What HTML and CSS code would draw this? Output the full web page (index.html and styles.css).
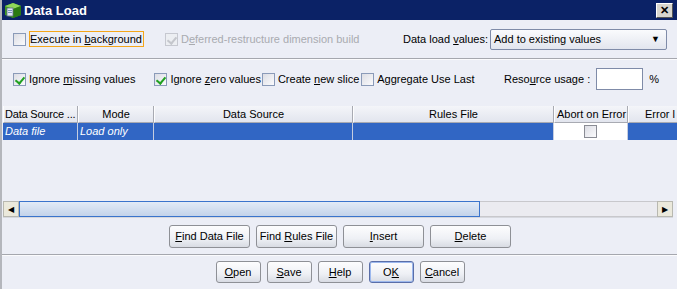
FILE: index.html
```html
<!DOCTYPE html>
<html lang="en">
<head>
  <meta charset="UTF-8" />
  <title>Data Load</title>
  <link rel="stylesheet" href="styles.css">
</head>
<body>
  <div class="dialog">
    <div class="titlebar">
      <svg class="app-icon" width="18" height="17" viewBox="0 0 18 17">
        <polygon points="9,1 17,4 17,13 9,16 1,13 1,4" fill="#3d9a1e"/>
        <polygon points="9,1 17,4 9,7 1,4" fill="#8fd65a"/>
        <polygon points="9,7 17,4 17,13 9,16" fill="#2a7a12"/>
        <rect x="3" y="6" width="6" height="8" fill="#dfe6f2" stroke="#5a6a8a" stroke-width="0.8"/>
        <line x1="4" y1="8.5" x2="8" y2="8.5" stroke="#5a7ab0" stroke-width="0.8"/>
        <line x1="4" y1="10.5" x2="8" y2="10.5" stroke="#5a7ab0" stroke-width="0.8"/>
      </svg>
      <span class="title">Data Load</span>
      <span class="close">&#x2715;</span>
    </div>

    <div class="opt-row row-top">
      <span class="check"></span>
      <span class="label focused">Execute in <u>b</u>ackground</span>
      <span class="check checked disabled"></span>
      <span class="label muted">D<u>e</u>ferred-restructure dimension build</span>
      <span class="label values-label">Data load <u>v</u>alues:</span>
      <div class="select">
        <span>Add to existing values</span>
        <span class="arrow">&#9660;</span>
      </div>
    </div>

    <div class="sep"></div>

    <div class="opt-row row-mid">
      <span class="check checked"></span>
      <span class="label">Ignore <u>m</u>issing values</span>
      <span class="check checked gap-left"></span>
      <span class="label">Ignore <u>z</u>ero values</span>
      <span class="check"></span>
      <span class="label">Create <u>n</u>ew slice</span>
      <span class="check"></span>
      <span class="label">A<u>g</u>gregate Use Last</span>
      <span class="label usage-label">Reso<u>u</u>rce usage :</span>
      <span class="text-input"></span>
      <span class="label pct">%</span>
    </div>

    <div class="grid">
      <div class="grid-body">
        <div class="grid-row head">
          <div class="cell c1 left">Data Source ...</div>
          <div class="cell c2">Mode</div>
          <div class="cell c3">Data Source</div>
          <div class="cell c4">Rules File</div>
          <div class="cell c5">Abort on Error</div>
          <div class="cell c6 left">Error l</div>
        </div>
        <div class="grid-row sel">
          <div class="cell c1 left">Data file</div>
          <div class="cell c2 left">Load only</div>
          <div class="cell c3"></div>
          <div class="cell c4"></div>
          <div class="cell c5 white"><span class="check small"></span></div>
          <div class="cell c6"></div>
        </div>
      </div>
      <div class="hscroll">
        <span class="sb-btn">&#9664;</span>
        <div class="sb-thumb"><span class="grip"></span></div>
        <div class="sb-track"></div>
        <span class="sb-btn">&#9654;</span>
      </div>
    </div>

    <div class="btn-row">
      <button class="btn"><u>F</u>ind Data File</button>
      <button class="btn">Find <u>R</u>ules File</button>
      <button class="btn"><u>I</u>nsert</button>
      <button class="btn"><u>D</u>elete</button>
    </div>

    <div class="sep"></div>

    <div class="btn-row footer">
      <button class="btn"><u>O</u>pen</button>
      <button class="btn"><u>S</u>ave</button>
      <button class="btn"><u>H</u>elp</button>
      <button class="btn default">O<u>K</u></button>
      <button class="btn"><u>C</u>ancel</button>
    </div>
  </div>
</body>
</html>
```

FILE: styles.css
```css
* { box-sizing: border-box; }
body {
  margin: 0;
  font-family: 'Liberation Sans', Arial, sans-serif;
  font-size: 11px;
  color: #000;
  background: #eceef6;
}
.dialog {
  width: 677px;
  height: 289px;
  background: #eceef6;
  border-left: 2px solid #b4b6bc;
  overflow: hidden;
}
.titlebar {
  height: 20px;
  margin-left: -2px;
  background: #0b2266;
  display: flex;
  align-items: center;
  padding: 0 4px 0 4px;
}
.app-icon { flex: none; }
.title {
  color: #fff;
  font-weight: bold;
  font-size: 13px;
  margin-left: 2px;
  flex: 1;
}
.close {
  width: 17px;
  height: 15px;
  background: #d8d6ce;
  border: 1px solid;
  border-color: #fff #555 #555 #fff;
  font-size: 11px;
  font-weight: bold;
  line-height: 13px;
  text-align: center;
  color: #000;
}
u { text-decoration: underline; }

.opt-row {
  display: flex;
  align-items: center;
}
.row-top { height: 38px; padding: 0 10px 0 11px; }
.row-mid { height: 38px; padding: 0 18px 0 11px; margin-bottom: 8px; }

.check {
  flex: none;
  width: 13px;
  height: 13px;
  border: 1px solid #8a9ab8;
  background: linear-gradient(135deg, #dcdde4, #fbfbfd);
  position: relative;
}
.check.checked::after {
  content: "";
  position: absolute;
  left: 3px;
  top: 1px;
  width: 4px;
  height: 7px;
  border: solid #21a121;
  border-width: 0 2px 2px 0;
  transform: rotate(40deg);
}
.check.disabled { border-color: #c6c8d0; background: #eceef2; }
.check.disabled::after { border-color: #c4c6cc; }
.label { margin-left: 3px; white-space: nowrap; flex: none; }
.focused { border: 1px solid #f4a619; padding: 1px 1px 1px 0; margin-right: 21px; }
.muted { color: #a9abb0; }
.values-label { margin-left: auto; margin-right: 2px; }
.select {
  flex: none;
  width: 177px;
  height: 21px;
  border: 1px solid #7f8ba8;
  border-radius: 2px;
  background: linear-gradient(#fafbfd, #e2e5ee);
  display: flex;
  align-items: center;
  justify-content: space-between;
  padding: 0 6px 0 3px;
}
.select .arrow { font-size: 9px; }

.sep {
  height: 2px;
  border-top: 1px solid #a5a7ae;
  border-bottom: 1px solid #fbfbfd;
}

.gap-left { margin-left: 19px; }
.row-mid .label:nth-child(4) { margin-right: 1px; }
.row-mid .label:nth-child(6) { margin-right: 2px; }
.usage-label { margin-left: auto; }
.text-input {
  flex: none;
  width: 47px;
  height: 22px;
  margin-left: 6px;
  border: 1px solid #7f8ba8;
  background: #fff;
}
.pct { margin-left: 6px; }

.grid {
  height: 112px;
  margin-left: 1px;
  display: flex;
  flex-direction: column;
}
.grid-body { flex: 1; }
.grid-row { display: flex; height: 17px; }
.cell {
  flex: none;
  height: 17px;
  line-height: 16px;
  text-align: center;
  white-space: nowrap;
  overflow: hidden;
  padding: 0 2px;
}
.cell.left { text-align: left; }
.c1 { width: 75px; }
.c2 { width: 76px; }
.c3 { width: 199px; }
.c4 { width: 201px; }
.c5 { width: 74px; }
.c6 { width: 50px; }
.head .cell {
  background: linear-gradient(#f4f5f9, #e2e5ee);
  border-right: 1px solid #a8aab2;
  border-bottom: 1px solid #a8aab2;
  border-left: 1px solid #fdfdfe;
}
.head .c1 { padding: 0 0 0 1px; letter-spacing: -0.2px; }
.head .c6 { padding-left: 16px; }
.sel .cell {
  background: #3166c4;
  color: #fff;
  font-style: italic;
  border-right: 1px solid #c5cde0;
}
.sel .cell.white {
  background: #fff;
  display: flex;
  justify-content: center;
  align-items: center;
}
.check.small { width: 13px; height: 13px; border-color: #8a8c94; }

.hscroll {
  height: 17px;
  display: flex;
  margin-right: 4px;
  border-bottom: 1px solid #d6d8de;
}
.sb-btn {
  width: 16px;
  flex: none;
  background: #ebe9dc;
  border: 1px solid #b8b8b0;
  font-size: 8px;
  line-height: 15px;
  text-align: center;
}
.sb-thumb {
  width: 461px;
  flex: none;
  border: 1px solid #3a74cc;
  background: linear-gradient(#e2ebf7, #c3d3ea);
  display: flex;
  justify-content: center;
  align-items: center;
}
.grip {
  width: 22px;
  height: 9px;
  background-image: radial-gradient(#9fb6dc 45%, transparent 50%);
  background-size: 2px 2px;
}
.sb-track {
  flex: 1;
  background: #ebebf0;
  border-top: 1px solid #c8c8cc;
  border-bottom: 1px solid #c8c8cc;
}

.btn-row {
  height: 36px;
  display: flex;
  justify-content: center;
  align-items: center;
  gap: 6px;
  padding-left: 1px;
}
.btn {
  font-family: inherit;
  font-size: 11px;
  width: 81px;
  height: 23px;
  border: 1px solid #8e9096;
  border-radius: 3px;
  background: linear-gradient(#fdfdfe, #eef0f5 60%, #d8dbe3);
  padding: 0;
  color: #000;
  white-space: nowrap;
}
.footer { height: 33px; padding-bottom: 2px; }
.footer .btn { width: 45px; height: 22px; }
.btn.default {
  border-color: #5a6ea8;
  box-shadow: inset 0 0 0 1px #9cb8ee;
}
```
